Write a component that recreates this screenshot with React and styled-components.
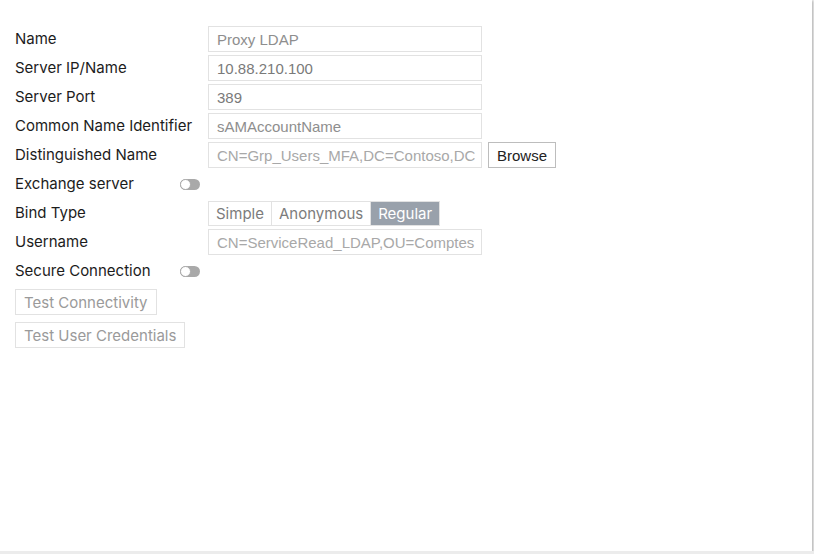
import styled, { createGlobalStyle } from "styled-components";

const GlobalStyle = createGlobalStyle`
  body {
    margin: 0;
    background: #ececec;
    font-family: Inter, "Noto Sans", sans-serif;
  }
`;

const Panel = styled.main`
  width: 812px;
  height: 551px;
  box-sizing: border-box;
  background: #ffffff;
  box-shadow: 1px 1px 2px rgba(0, 0, 0, 0.25);
  padding: 26px 15px 0 15px;
`;

const Form = styled.form`
  display: flex;
  flex-direction: column;
  gap: 3px;
`;

const Row = styled.div`
  display: grid;
  grid-template-columns: 193px auto;
  align-items: center;
  height: 26px;
`;

const Label = styled.label`
  width: 185px;
  font-size: 15px;
  color: #1c1c1c;
  display: flex;
  align-items: center;
  margin-top: -2px;
`;

const Field = styled.div`
  display: flex;
  align-items: center;
  gap: 6px;
`;

const Input = styled.input`
  box-sizing: border-box;
  width: 274px;
  height: 26px;
  border: 1px solid #e2e2e2;
  padding: 0 6px 0 8px;
  font-family: "Liberation Sans", Arial, sans-serif;
  font-size: 15px;
  color: #7a7a7a;
  outline: none;

  &::placeholder {
    color: ${(p) => (p.$dim ? "#a8a8a8" : "#8e8e8e")};
  }
`;

const Browse = styled.button`
  box-sizing: border-box;
  height: 26px;
  padding: 0 8px;
  background: #fff;
  border: 1px solid #bdbdbd;
  font-family: "Liberation Sans", Arial, sans-serif;
  font-size: 15px;
  color: #222;
`;

const Toggle = styled.span`
  position: relative;
  display: inline-block;
  width: 20px;
  height: 11px;
  border-radius: 6px;
  background: #a9a9a9;
  margin-left: auto;
  margin-top: 2px;

  &::after {
    content: "";
    position: absolute;
    left: 0;
    top: 0;
    width: 9px;
    height: 9px;
    border-radius: 50%;
    background: #fff;
    border: 1px solid #a9a9a9;
  }
`;

const Segments = styled.div`
  display: flex;
  height: 25px;
  border: 1px solid #e2e2e2;
  box-sizing: border-box;
  width: fit-content;
`;

const Segment = styled.button`
  border: none;
  border-left: 1px solid #e2e2e2;
  background: ${(p) => (p.$active ? "#99a1ab" : "#fff")};
  color: ${(p) => (p.$active ? "#fff" : "#7c7c7c")};
  font-family: Inter, sans-serif;
  font-size: 15px;
  padding: 0 7px;
  margin: 0;
  ${(p) => p.$first && "border-left: none;"}
`;

const ActionButton = styled.button`
  box-sizing: border-box;
  height: 26px;
  padding: 0 8px;
  background: #fff;
  border: 1px solid #e2e2e2;
  color: #9a9a9a;
  font-family: Inter, sans-serif;
  font-size: 15px;
  width: fit-content;
`;

const Actions = styled.div`
  display: flex;
  flex-direction: column;
  gap: 7px;
  margin-top: 2px;
`;

function App() {
  return (
    <>
      <GlobalStyle />
      <Panel>
        <Form onSubmit={(e) => e.preventDefault()}>
          <Row>
            <Label>Name</Label>
            <Input placeholder="Proxy LDAP" />
          </Row>
          <Row>
            <Label>Server IP/Name</Label>
            <Input defaultValue="10.88.210.100" />
          </Row>
          <Row>
            <Label>Server Port</Label>
            <Input defaultValue="389" />
          </Row>
          <Row>
            <Label>Common Name Identifier</Label>
            <Input placeholder="sAMAccountName" />
          </Row>
          <Row>
            <Label>Distinguished Name</Label>
            <Field>
              <Input $dim placeholder="CN=Grp_Users_MFA,DC=Contoso,DC=local" />
              <Browse type="button">Browse</Browse>
            </Field>
          </Row>
          <Row>
            <Label>
              Exchange server
              <Toggle />
            </Label>
          </Row>
          <Row>
            <Label>Bind Type</Label>
            <Segments>
              <Segment type="button" $first>Simple</Segment>
              <Segment type="button">Anonymous</Segment>
              <Segment type="button" $active>Regular</Segment>
            </Segments>
          </Row>
          <Row>
            <Label>Username</Label>
            <Input $dim placeholder="CN=ServiceRead_LDAP,OU=Comptes" />
          </Row>
          <Row>
            <Label>
              Secure Connection
              <Toggle />
            </Label>
          </Row>
          <Actions>
            <ActionButton type="button">Test Connectivity</ActionButton>
            <ActionButton type="button">Test User Credentials</ActionButton>
          </Actions>
        </Form>
      </Panel>
    </>
  );
}

export default App;
